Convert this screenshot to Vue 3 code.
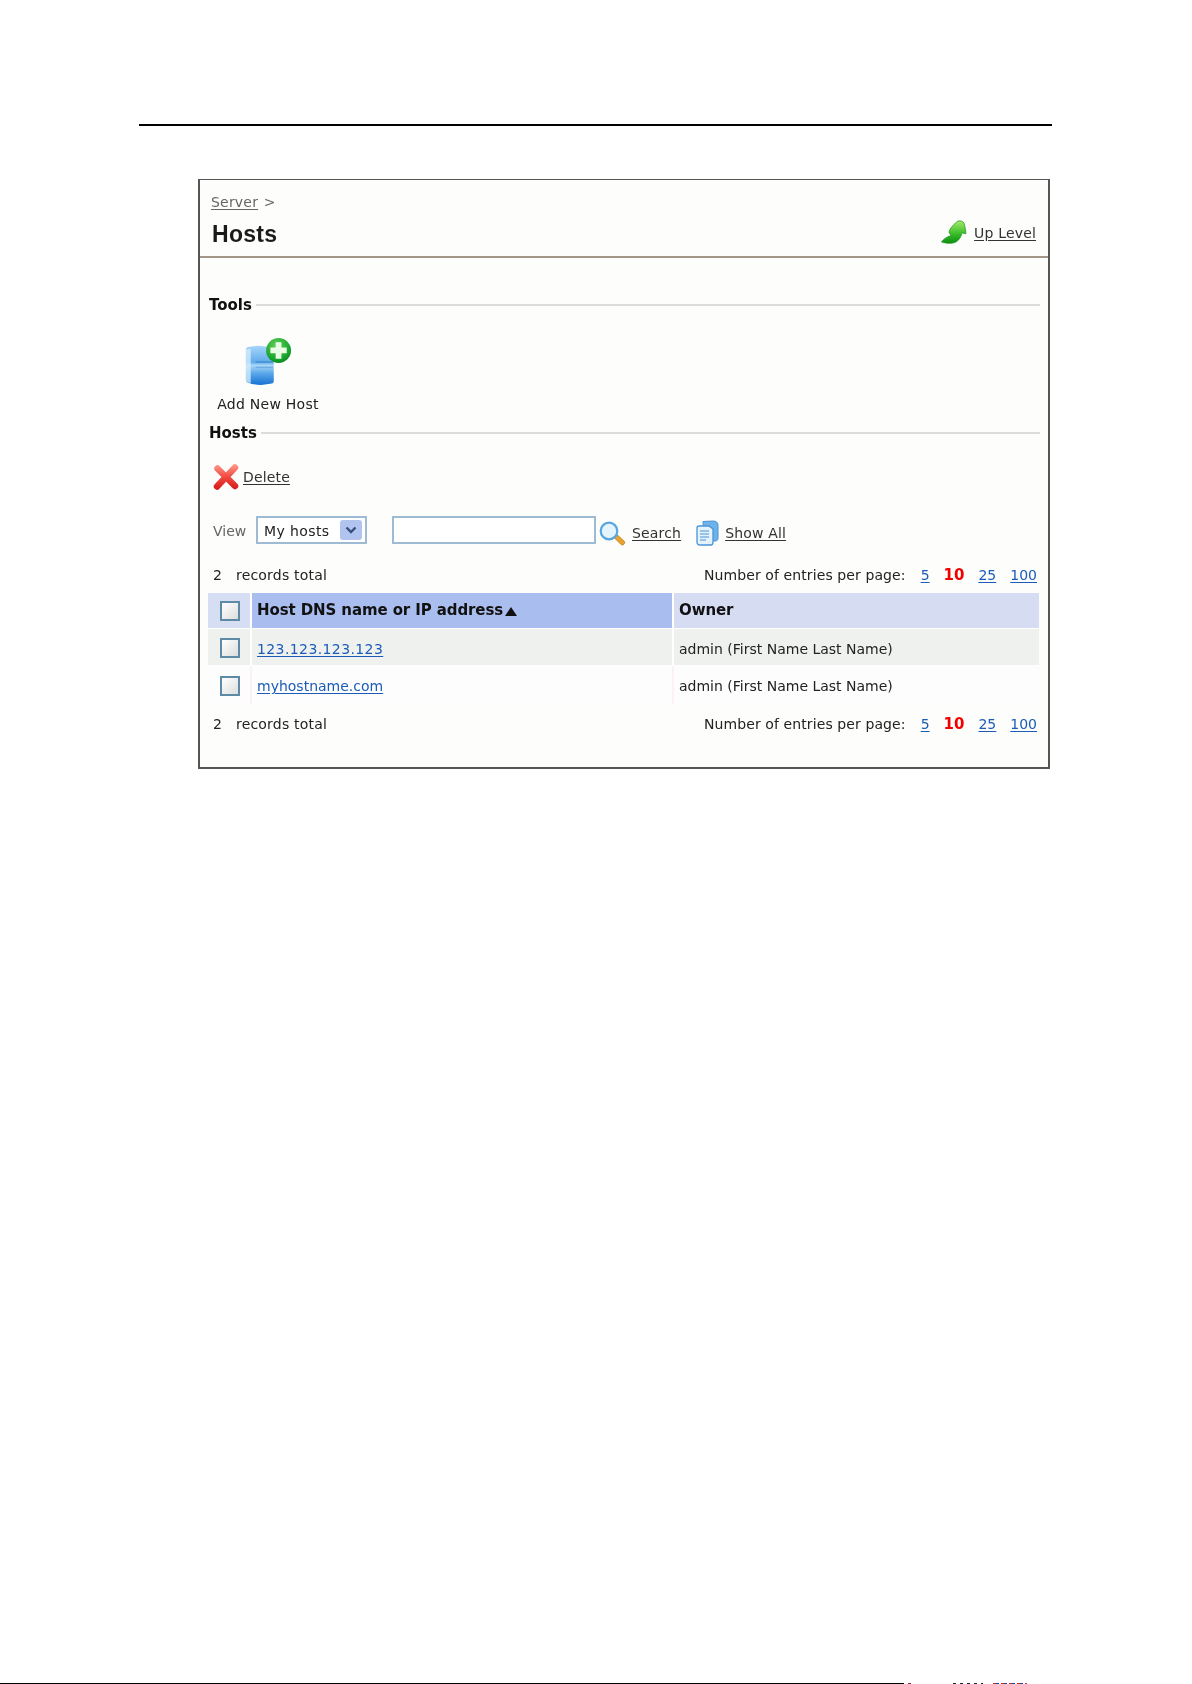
<script setup>
const rows = [
  { host: '123.123.123.123', owner: 'admin (First Name Last Name)', cls: 'odd', lcls: 'ip' },
  { host: 'myhostname.com', owner: 'admin (First Name Last Name)', cls: 'even', lcls: '' }
]
const sizes = ['5', '10', '25', '100']
</script>

<template>
  <div class="page">
    <div class="rule"></div>
    <section class="panel">
      <header class="head">
        <div class="crumb"><a class="grey-link">Server</a> <span class="gt">&gt;</span></div>
        <div class="title-row">
          <h1>Hosts</h1>
          <div class="up">
            <svg width="26" height="25" viewBox="0 0 26 25">
              <defs><linearGradient id="gup" x1="0" y1="0" x2="0" y2="1"><stop offset="0" stop-color="#a4ea6a"/><stop offset=".55" stop-color="#3fbf2c"/><stop offset="1" stop-color="#0a8f10"/></linearGradient></defs>
              <path d="M.5 22c2-3 5-5 9.500-6.500C9 14 8 13 8 12c1-4 5-8 9-11 3-.5 5 .5 6 2 1 3 1.500 7 2 10.500-1 .5-3 0-4-1-.5 3-2 7-6 9.500-4 2-10 1.500-14.500 0z" fill="url(#gup)" stroke="#1a9220" stroke-width=".7" stroke-linejoin="round"/>
            </svg>
            <a class="dark-link">Up Level</a>
          </div>
        </div>
      </header>

      <div class="sec tools-sec"><b>Tools</b><i></i></div>
      <div class="tile">
        <svg width="50" height="50" viewBox="0 0 50 50">
          <defs>
            <linearGradient id="gsv" x1="0" y1="0" x2="0" y2="1"><stop offset="0" stop-color="#a7d6f8"/><stop offset=".42" stop-color="#5fabec"/><stop offset=".5" stop-color="#a9d6f6"/><stop offset=".7" stop-color="#5ba8ea"/><stop offset="1" stop-color="#1671d2"/></linearGradient>
            <radialGradient id="ggr" cx=".42" cy=".3" r=".8"><stop offset="0" stop-color="#62d158"/><stop offset=".7" stop-color="#16a32c"/><stop offset="1" stop-color="#067a1c"/></radialGradient>
          </defs>
          <path d="M2 12c0-1 1-2 2-2.500L14 8c6 0 11 1 16 3 .7 1 1 2 1 3v31c0 1-1 2-2 2.500l-11 1.500c-5 0-10-1-15-3-.7-1-1-2-1-3z" fill="url(#gsv)"/>
          <path d="M2 12l5-1v36l-4-1c-.7-1-1-2-1-3z" fill="#d3ecfc" opacity=".8"/>
          <path d="M12 24h18v2H12zM12 30h18v1H12z" fill="#2f7fc8" opacity=".5"/>
          <circle cx="36" cy="13" r="13" fill="url(#ggr)"/>
          <path d="M33 4.500h6v5.500h5.500v6H39v5.500h-6V16h-5.500v-6H33z" fill="#e9fce6"/>
        </svg>
        <span>Add New Host</span>
      </div>

      <div class="sec hosts-sec"><b>Hosts</b><i></i></div>
      <div class="delete-row">
        <svg width="26" height="26" viewBox="0 0 26 26">
          <defs><linearGradient id="grd" gradientUnits="userSpaceOnUse" x1="0" y1="0" x2="0" y2="26"><stop offset="0" stop-color="#ff9c8e"/><stop offset=".5" stop-color="#f04a40"/><stop offset="1" stop-color="#d31818"/></linearGradient></defs>
          <path d="M4.500 4.500l17.500 17.500M22 3.500L4 22.500" fill="none" stroke="url(#grd)" stroke-width="6.500" stroke-linecap="round"/>
        </svg>
        <a class="dark-link">Delete</a>
      </div>

      <div class="filter-row">
        <span class="view">View</span>
        <div class="select"><span class="sel-txt">My hosts</span><span class="btn">
          <svg width="12" height="9" viewBox="0 0 12 9"><path d="M1.500 1.500l4.500 4.500 4.500-4.500" fill="none" stroke="#33507f" stroke-width="2.400"/></svg>
        </span></div>
        <div class="field"></div>
        <div class="actions">
          <svg class="mag" width="27" height="25" viewBox="0 0 27 25">
            <path d="M15.500 17l3-3 7 6.500c1 2-1.500 4.500-3.500 3z" fill="#e9a22e" stroke="#b5761a" stroke-width=".7"/>
            <circle cx="10" cy="10" r="8.300" fill="#e4f4fc" stroke="#59a6de" stroke-width="2.200"/>
          </svg>
          <a class="dark-link search">Search</a>
          <svg class="docs" width="23" height="26" viewBox="0 0 23 26">
            <path d="M7 1.500l10-.5c3 0 5 1.500 5 4v13c0 2-1 3-3 3H8z" fill="#6db2ea" stroke="#4a94d6"/>
            <path d="M3 6h10l4 3v13c0 2-1 3-2 3H4c-2 0-3-1-3-3V8c0-1 1-2 2-2z" fill="#e4f2fc" stroke="#4a94d6" stroke-width="1.300"/>
            <path d="M4 11h9M4 14h9M4 17h9M4 20h6" stroke="#4a94d6" stroke-width="1.200"/>
          </svg>
          <a class="dark-link">Show All</a>
        </div>
      </div>

      <div class="meta top-meta">
        <div class="total"><span class="n">2</span><span>records total</span></div>
        <div class="pager">
          <span class="lbl">Number of entries per page:</span>
          <template v-for="s in sizes" :key="s">
            <b v-if="s === '10'" class="cur">{{ s }}</b>
            <a v-else class="blue-link">{{ s }}</a>
          </template>
        </div>
      </div>

      <div class="grid">
        <div class="cell h0"><span class="box"></span></div>
        <div class="cell h1"><b>Host DNS name or IP address</b><span class="tri"></span></div>
        <div class="cell h2"><b>Owner</b></div>
        <template v-for="r in rows" :key="r.host">
          <div class="cell c0" :class="r.cls"><span class="box"></span></div>
          <div class="cell c1" :class="r.cls"><a class="blue-link" :class="r.lcls">{{ r.host }}</a></div>
          <div class="cell c2" :class="r.cls">{{ r.owner }}</div>
        </template>
      </div>

      <div class="meta bottom-meta">
        <div class="total"><span class="n">2</span><span>records total</span></div>
        <div class="pager">
          <span class="lbl">Number of entries per page:</span>
          <template v-for="s in sizes" :key="s">
            <b v-if="s === '10'" class="cur">{{ s }}</b>
            <a v-else class="blue-link">{{ s }}</a>
          </template>
        </div>
      </div>
    </section>

    <footer class="foot">
      <i class="solid"></i><i class="b1"></i><i class="b2"></i><i class="b3"></i>
    </footer>
  </div>
</template>

<style>
html, body { background: #fff; }
</style>

<style scoped>
.page {
  width: 1192px; height: 1684px; overflow: hidden; background: #fff;
  display: flex; flex-direction: column;
  font-family: "DejaVu Sans", sans-serif; font-size: 14px; color: #222;
}
.rule { height: 2px; background: #000; margin: 124px 140px 0 139px; flex: none; }
.panel {
  flex: none; box-sizing: border-box; width: 852px; height: 590px; margin: 53px 0 0 198px;
  border: 2px solid #555; border-top-width: 1px; background: #fdfdfb;
  padding: 0 9px 0 8px; filter: blur(.3px);
}
a { text-decoration: underline; text-underline-offset: 2px; cursor: pointer; }
.head { margin: 0 -9px 0 -8px; height: 78px; box-sizing: border-box; padding: 11px 12px 0 11px; border-bottom: 2px solid #a39585; }
.crumb { height: 22px; line-height: 22px; color: #666; letter-spacing: .2px; }
.grey-link { color: #666; }
.gt { margin-left: 1px; }
.title-row { display: flex; justify-content: space-between; align-items: center; height: 41px; }
h1 { margin: 0 0 0 1px; font: 700 23px/42px "Liberation Sans", sans-serif; letter-spacing: .3px; color: #1a1a1a; }
.up { display: flex; align-items: center; gap: 7px; margin-top: -2px; }
.dark-link { color: #333; letter-spacing: .17px; }
.sec { display: flex; align-items: center; height: 20px; gap: 4px; margin: 0 -1px 0 1px; }
.sec b { font-size: 15px; color: #111; }
.sec i { flex: 1; height: 2px; background: #dcdcdc; }
.tools-sec { margin-top: 37px; }
.tile { width: 120px; height: 99px; box-sizing: border-box; padding-top: 23px; display: flex; flex-direction: column; align-items: center; }
.tile span { margin-top: 8px; line-height: 20px; letter-spacing: .25px; white-space: nowrap; color: #222; }
.hosts-sec { margin-top: 9px; }
.delete-row { display: flex; align-items: center; gap: 4px; height: 28px; margin-top: 20px; padding-left: 5px; }
.filter-row { display: flex; align-items: center; height: 28px; margin-top: 25px; padding-left: 5px; }
.view { color: #666; width: 43px; padding-top: 2px; }
.select {
  box-sizing: border-box; width: 111px; height: 28px; border: 2px solid #9fbad3; background: #fff;
  display: flex; align-items: center; justify-content: space-between; padding: 0 3px 0 6px;
}
.sel-txt { letter-spacing: .4px; padding-top: 2px; }
.btn { width: 22px; height: 20px; background: #b0c4ef; border-radius: 3px; display: flex; align-items: center; justify-content: center; }
.field { box-sizing: border-box; width: 204px; height: 28px; margin-left: 25px; border: 2px solid #9fbad3; background: #fff; }
.actions { display: flex; align-items: center; margin-top: 6px; }
.mag { margin-left: 3px; }
.search { margin-left: 6px; }
.docs { margin: 0 6px 0 15px; }
.meta { display: flex; justify-content: space-between; align-items: center; height: 20px; padding: 0 2px 0 5px; }
.top-meta { margin-top: 21px; }
.bottom-meta { margin-top: 10px; }
.total { display: flex; letter-spacing: .2px; }
.n { width: 23px; }
.pager { display: flex; align-items: center; gap: 14px; }
.lbl { letter-spacing: .1px; margin-right: 1px; }
.blue-link { color: #1a5cb8; }
.ip { letter-spacing: .4px; }
.cur { color: #f00000; font-size: 15px; }
.grid { display: grid; grid-template-columns: 42px 422px 1fr; grid-template-rows: 35px 38px 38px; margin-top: 8px; }
.cell { display: flex; align-items: center; box-sizing: border-box; border-left: 2px solid #fff; }
.cell:nth-child(3n+1) { border-left: 0; }
.cell b { color: #111; font-size: 15px; letter-spacing: -.1px; }
.h0 { background: #d6def3; }
.h1 { background: #a9bdee; padding: 0 0 2px 5px; }
.h2 { background: #d6ddf3; padding: 0 0 2px 5px; }
.odd { background: #eff1ef; border-top: 1px solid #fff; border-bottom: 1px solid #fff; }
.even { background: #fdfdfd; border-left-color: #fbf2f4; }
.c1, .c2 { padding-left: 5px; padding-top: 2px; }
.odd.c1, .odd.c2 { padding-top: 4px; }
.h0, .c0 { justify-content: flex-start; padding-left: 12px; }
.c0 { padding-top: 2px; }
.box { box-sizing: border-box; width: 20px; height: 20px; border: 2px solid #5d8ba6; background: linear-gradient(135deg, #fff, #ddd); }
.tri { width: 0; height: 0; margin: 4px 0 0 2px; border-left: 6px solid transparent; border-right: 6px solid transparent; border-bottom: 9px solid #111; }
.foot { margin-top: auto; height: 1px; flex: none; display: flex; }
.foot i { display: block; height: 1px; }
.solid { width: 904px; background: #000; }
.b1 { width: 3px; margin-left: 4px; background: #a02050; }
.b2 { width: 30px; margin-left: 42px; background: repeating-linear-gradient(90deg, #223 0 3px, #fff 3px 7px); }
.b3 { width: 34px; margin-left: 10px; background: repeating-linear-gradient(90deg, #c03030 0 3px, #2040a0 3px 6px, #fff 6px 8px); }
</style>
